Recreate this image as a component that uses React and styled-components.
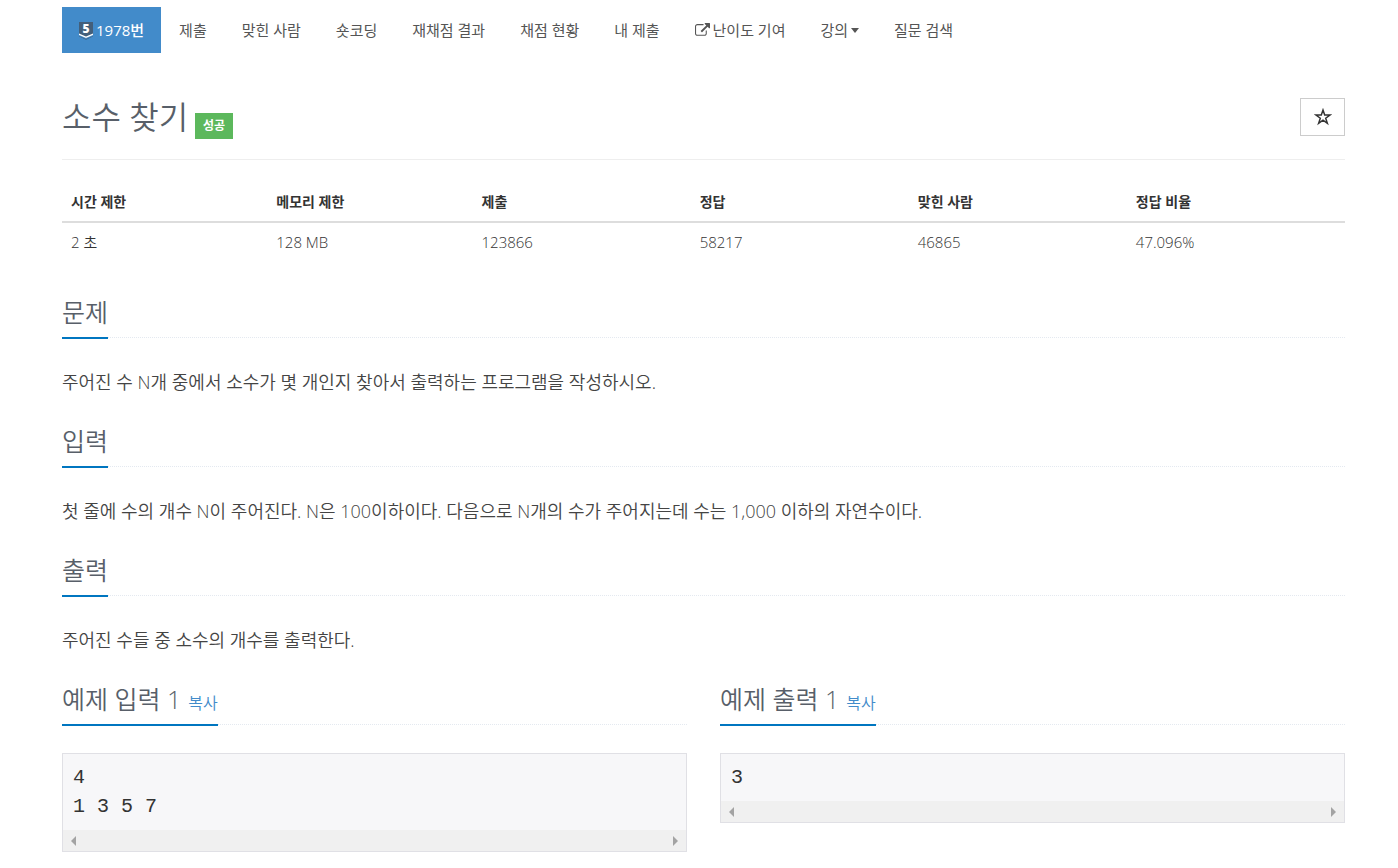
import React from "react";
import styled, { createGlobalStyle } from "styled-components";

const menus = [
  { name: "제출" },
  { name: "맞힌 사람" },
  { name: "숏코딩" },
  { name: "재채점 결과" },
  { name: "채점 현황" },
  { name: "내 제출" },
  { name: "난이도 기여", external: true },
  { name: "강의", dropdown: true },
  { name: "질문 검색" },
];

const infos = [
  { name: "시간 제한", value: "2 초", width: 16 },
  { name: "메모리 제한", value: "128 MB", width: 16 },
  { name: "제출", value: "123866", width: 17 },
  { name: "정답", value: "58217", width: 17 },
  { name: "맞힌 사람", value: "46865", width: 17 },
  { name: "정답 비율", value: "47.096%", width: 17 },
];

const sections = [
  { title: "문제", text: "주어진 수 N개 중에서 소수가 몇 개인지 찾아서 출력하는 프로그램을 작성하시오." },
  { title: "입력", text: "첫 줄에 수의 개수 N이 주어진다. N은 100이하이다. 다음으로 N개의 수가 주어지는데 수는 1,000 이하의 자연수이다." },
  { title: "출력", text: "주어진 수들 중 소수의 개수를 출력한다." },
];

const samples = [
  { title: "예제 입력 1", data: "4\n1 3 5 7" },
  { title: "예제 출력 1", data: "3" },
];

const Tier = () => (
  <TierSvg viewBox="0 -3 14 22" aria-hidden="true">
    <path d="M0 0H14V12L7 16L0 12Z" fill="#435f7a" />
    <path d="M0 11.5L7 14.5L14 11.5V13L7 16L0 13Z" fill="#fff" />
    <path d="M0 14L7 17L14 14V14.5L7 17.7L0 14.5Z" fill="#435f7a" />
    <text x="7" y="10.5" textAnchor="middle" fontSize="12" fontWeight="800" fill="#fff">5</text>
  </TierSvg>
);

const External = () => (
  <ExternalSvg viewBox="0 0 1792 1792" aria-hidden="true">
    <path d="M1408 928v320q0 119-84.500 203.500t-203.500 84.500h-832q-119 0-203.500-84.500t-84.500-203.500v-832q0-119 84.500-203.500t203.500-84.500h704q14 0 23 9t9 23v64q0 14-9 23t-23 9h-704q-66 0-113 47t-47 113v832q0 66 47 113t113 47h832q66 0 113-47t47-113v-320q0-14 9-23t23-9h64q14 0 23 9t9 23zm384-864v512q0 26-19 45t-45 19-45-19l-176-176-652 652q-10 10-23 10t-23-10l-114-114q-10-10-10-23t10-23l652-652-176-176q-19-19-19-45t19-45 45-19h512q26 0 45 19t19 45z" />
  </ExternalSvg>
);

const ScrollTrack = () => (
  <Track aria-hidden="true">
    <Arrow viewBox="0 0 5 10"><path d="M5 0V10L0 5Z" /></Arrow>
    <Arrow viewBox="0 0 5 10"><path d="M0 0V10L5 5Z" /></Arrow>
  </Track>
);

const App = () => {
  return (
    <Container>
      <GlobalStyle />
      <Menu>
        <MenuLink href="#problem" $active>
          <Tier />
          1978번
        </MenuLink>
        {menus.map((menu) => (
          <MenuLink href="#menu" key={menu.name}>
            {menu.external && <External />}
            {menu.name}
            {menu.dropdown && <Caret />}
          </MenuLink>
        ))}
      </Menu>

      <TitleBox>
        <Title>소수 찾기</Title>
        <Label>성공</Label>
        <StarButton type="button" aria-label="즐겨찾기">
          <StarSvg viewBox="0 0 16 16" aria-hidden="true">
            <path d="M8 1.800L9.500 6.300H14.200L10.400 9.100L11.900 13.700L8 10.900L4.100 13.700L5.600 9.100L1.800 6.300H6.500Z" />
          </StarSvg>
        </StarButton>
      </TitleBox>

      <InfoTable>
        <thead>
          <tr>
            {infos.map((info) => (
              <InfoHead key={info.name} scope="col" $width={info.width}>{info.name}</InfoHead>
            ))}
          </tr>
        </thead>
        <tbody>
          <tr>
            {infos.map((info) => (
              <InfoCell key={info.name}>{info.value}</InfoCell>
            ))}
          </tr>
        </tbody>
      </InfoTable>

      {sections.map((section) => (
        <section key={section.title}>
          <Headline>
            <HeadlineText>{section.title}</HeadlineText>
          </Headline>
          <Paragraph>{section.text}</Paragraph>
        </section>
      ))}

      <SampleGrid>
        {samples.map((sample) => (
          <section key={sample.title}>
            <Headline>
              <HeadlineText>
                {sample.title}
                <CopyButton type="button">복사</CopyButton>
              </HeadlineText>
            </Headline>
            <SampleBox>
              <SampleData>{sample.data}</SampleData>
              <ScrollTrack />
            </SampleBox>
          </section>
        ))}
      </SampleGrid>
    </Container>
  );
};

export default App;

const GlobalStyle = createGlobalStyle`
  * {
    box-sizing : border-box;
  }

  body {
    margin : 0;
    background : #fff;
    color : #333;
    font-family : "Open Sans", "Noto Sans CJK KR", sans-serif;
    font-size : 15px;
    line-height : 24px;
  }
`

const Container = styled.main`
  padding : 7px 53px 16px 62px;
`

const Menu = styled.nav`
  display : flex;
  flex-wrap : wrap;
  gap : 1px;
`

const MenuLink = styled.a`
  display : flex;
  align-items : center;
  gap : 3px;
  height : 46px;
  padding : 0 17px;
  text-decoration : none;
  font-weight : ${(props) => (props.$active ? 500 : 400)};
  color : ${(props) => (props.$active ? "#fff" : "#555")};
  background : ${(props) => (props.$active ? "#428bca" : "transparent")};
`

const TierSvg = styled.svg`
  width : 14px;
  height : 22px;
  overflow : visible;
`

const ExternalSvg = styled.svg`
  width : 15px;
  height : 15px;
  fill : #555;
`

const Caret = styled.span`
  border-top : 5px solid #555;
  border-left : 4px solid transparent;
  border-right : 4px solid transparent;
`

const TitleBox = styled.header`
  display : flex;
  align-items : flex-end;
  margin-top : 42px;
  padding-bottom : 20px;
  border-bottom : 1px solid #eee;
`

const Title = styled.h1`
  margin : 0;
  font-size : 32px;
  line-height : 44px;
  font-weight : 350;
  color : #585f69;
`

const Label = styled.span`
  margin-left : 7px;
  padding : 0 8px;
  background : #5cb85c;
  color : #fff;
  font-size : 12px;
  font-weight : 700;
  line-height : 26px;
`

const StarButton = styled.button`
  display : flex;
  align-items : center;
  justify-content : center;
  align-self : flex-start;
  width : 45px;
  height : 38px;
  margin : 3px 0 0 auto;
  padding : 0;
  border : 1px solid #ccc;
  background : #fff;
  cursor : pointer;
`

const StarSvg = styled.svg`
  width : 18px;
  height : 18px;
  fill : none;
  stroke : #333;
  stroke-width : 1.3;
`

const InfoTable = styled.table`
  width : 100%;
  margin : 22px 0 35px;
  border-collapse : collapse;
  table-layout : fixed;
`

const InfoHead = styled.th`
  width : ${(props) => props.$width}%;
  padding : 8px 9px 7px;
  border-bottom : 2px solid #ddd;
  text-align : left;
  font-size : 14px;
  font-weight : 700;
`

const InfoCell = styled.td`
  padding : 7px 9px 8px;
  font-weight : 350;
`

const Headline = styled.div`
  margin-bottom : 28px;
  border-bottom : 1px dotted #e4e9f0;
`

const HeadlineText = styled.h2`
  width : fit-content;
  margin : 0 0 -2px;
  padding-bottom : 10px;
  border-bottom : 2px solid #0076c0;
  font-size : 25px;
  line-height : 30px;
  font-weight : 350;
  color : #585f69;
`

const Paragraph = styled.p`
  margin : 0 0 28px;
  color : #444;
  font-size : 18px;
  line-height : 32px;
  font-weight : 350;
`

const SampleGrid = styled.div`
  display : grid;
  grid-template-columns : 1fr 1fr;
  gap : 33px;

  @media (max-width: 700px) {
    grid-template-columns : 1fr;
  };
`

const CopyButton = styled.button`
  margin-left : 7px;
  padding : 0;
  border : 0;
  background : none;
  color : #428bca;
  font : inherit;
  font-size : 16px;
  line-height : 20px;
  cursor : pointer;
`

const SampleBox = styled.div`
  border : 1px solid #e0e0e5;
  background : #f7f7f9;
`

const SampleData = styled.pre`
  margin : 0;
  padding : 9px 10px;
  overflow : hidden;
  font-family : "Liberation Mono", monospace;
  font-size : 20px;
  line-height : 29px;
`

const Track = styled.div`
  display : flex;
  align-items : center;
  justify-content : space-between;
  height : 21px;
  padding : 0 8px;
  background : #f0f0f0;
`

const Arrow = styled.svg`
  width : 5px;
  height : 10px;
  fill : #a3a3a3;
`
